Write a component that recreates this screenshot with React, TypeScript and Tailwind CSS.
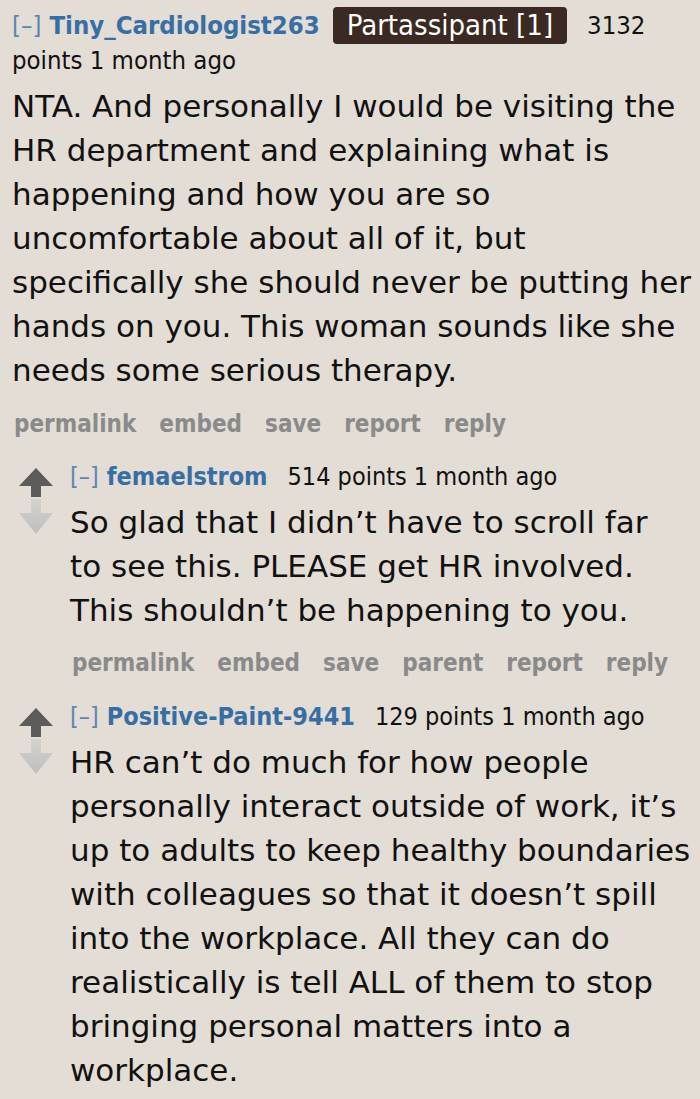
import React from 'react';

const UpArrow: React.FC = () => (
  <svg width="34" height="29" viewBox="0 0 34 29">
    <path d="M17 0 L34 18 L22 18 L22 29 L12 29 L12 18 L0 18 Z" fill="#5c5c5c" />
  </svg>
);

const DownArrow: React.FC = () => (
  <svg width="34" height="35" viewBox="0 0 34 35">
    <defs>
      <linearGradient id="dn" x1="0" y1="0" x2="0" y2="1">
        <stop offset="0" stopColor="#d6d3cf" />
        <stop offset="1" stopColor="#bdbdbd" />
      </linearGradient>
    </defs>
    <path d="M12 0 L22 0 L22 14 L34 14 L17 35 L0 14 L12 14 Z" fill="url(#dn)" />
  </svg>
);

interface ReplyProps {
  author: string;
  points: string;
  lines: string[];
  actions?: string[];
}

const Actions: React.FC<{ items: string[] }> = ({ items }) => (
  <div className="flex gap-[23px] text-[24px] leading-[30px] font-bold text-[#8a8a8a]">
    {items.map((a) => (
      <span key={a}>{a}</span>
    ))}
  </div>
);

const Reply: React.FC<ReplyProps> = ({ author, points, lines, actions }) => (
  <div className="flex">
    <div className="w-[70px] flex flex-col items-center pt-[6px] pl-[1px] gap-[2px] shrink-0">
      <UpArrow />
      <DownArrow />
    </div>
    <div className="flex-1">
      <div className="flex items-baseline text-[25px] leading-[30px]">
        <span className="text-[#5b86b3] mr-[8px]">[–]</span>
        <span className="text-[#376ea3] font-bold mr-[20px]">{author}</span>
        <span className="text-[#111]">{points} points 1 month ago</span>
      </div>
      <div
        className="text-[31px] leading-[44px] text-[#111] mt-[8px]"
        style={{ fontFamily: '"DejaVu Sans", sans-serif' }}
      >
        {lines.map((l, i) => (
          <div key={i} className="whitespace-nowrap">{l}</div>
        ))}
      </div>
      {actions && (
        <div className="mt-[16px] pl-[2px]">
          <Actions items={actions} />
        </div>
      )}
    </div>
  </div>
);

export default function App() {
  return (
    <div
      className="w-[700px] h-[1099px] overflow-hidden bg-[#e3ddd6]"
      style={{ fontFamily: '"DejaVu Sans Condensed", "DejaVu Sans", sans-serif' }}
    >
      <div className="px-[12px] pt-[7px]">
        <div className="flex items-center text-[25.5px] h-[37px] text-[#111]">
          <span className="text-[#5b86b3] mr-[8px]">[–]</span>
          <span className="text-[#376ea3] font-bold mr-[13px]">Tiny_Cardiologist263</span>
          <span className="bg-[#3b2a24] text-white rounded-[4px] px-[14px] h-[37px] leading-[37px] text-[29px] mr-[20px]">
            Partassipant [1]
          </span>
          <span>3132</span>
        </div>
        <div className="text-[25.5px] leading-[30px] mt-[1px] text-[#111]">points 1 month ago</div>
        <div
          className="text-[31px] leading-[44px] text-[#111] mt-[9px]"
          style={{ fontFamily: '"DejaVu Sans", sans-serif' }}
        >
          <div className="whitespace-nowrap">NTA. And personally I would be visiting the</div>
          <div>HR department and explaining what is</div>
          <div>happening and how you are so</div>
          <div>uncomfortable about all of it, but</div>
          <div className="whitespace-nowrap">specifically she should never be putting her</div>
          <div>hands on you. This woman sounds like she</div>
          <div>needs some serious therapy.</div>
        </div>
        <div className="mt-[17px] pl-[2px]">
          <Actions items={['permalink', 'embed', 'save', 'report', 'reply']} />
        </div>
      </div>
      <div className="mt-[23px]">
        <Reply
          author="femaelstrom"
          points="514"
          lines={[
            'So glad that I didn’t have to scroll far',
            'to see this. PLEASE get HR involved.',
            'This shouldn’t be happening to you.',
          ]}
          actions={['permalink', 'embed', 'save', 'parent', 'report', 'reply']}
        />
      </div>
      <div className="mt-[24px]">
        <Reply
          author="Positive-Paint-9441"
          points="129"
          lines={[
            'HR can’t do much for how people',
            'personally interact outside of work, it’s',
            'up to adults to keep healthy boundaries',
            'with colleagues so that it doesn’t spill',
            'into the workplace. All they can do',
            'realistically is tell ALL of them to stop',
            'bringing personal matters into a',
            'workplace.',
          ]}
        />
      </div>
    </div>
  );
}
